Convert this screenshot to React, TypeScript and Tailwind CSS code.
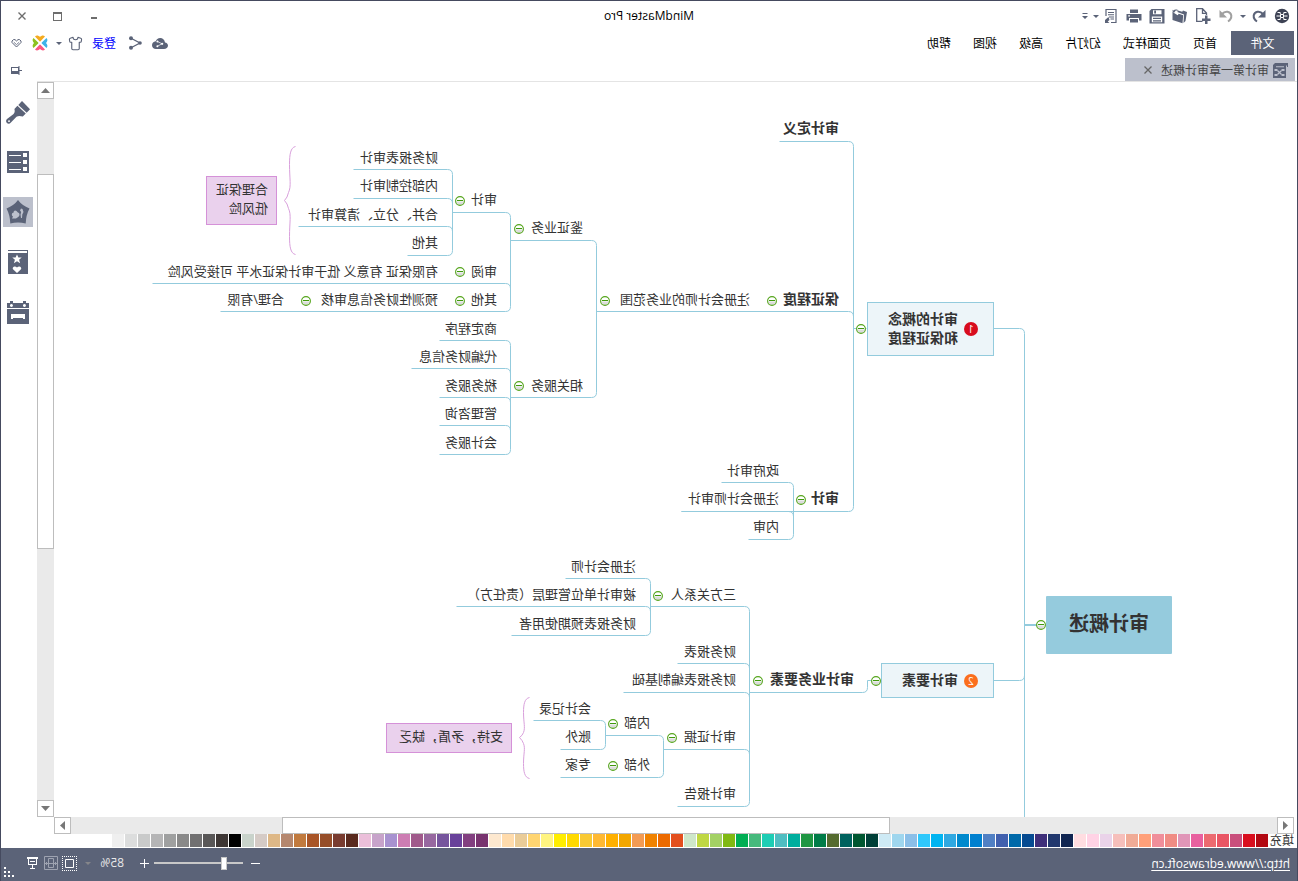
import { ReactNode } from "react";
import { Shirt } from "lucide-react";

interface MapLabel {
  text: string;
  x: number;
  y: number;
  bold?: boolean;
}

interface Branch {
  trunk: number;
  // [y of the line, x where the line ends]
  lines: [number, number][];
}

const MENUS = ["首页", "页面样式", "幻灯片", "高级", "视图", "帮助"];

const SWATCHES = [
  "#b20812", "#d90e1e", "#c94f7c", "#e95564", "#ec6a70", "#e8609f", "#e096b8", "#f08c84", "#f08e9a", "#ffa07a",
  "#f0ab96", "#f6bfbb", "#ead3e9", "#ffd3e5", "#ffdde1", "#102551", "#22386e", "#3f2f7a", "#064b91", "#0069a9",
  "#4160ae", "#5180c4", "#0080cf", "#0089cd", "#2fa8e1", "#00b4f1", "#2fc8fb", "#8bbfe8", "#9fd6ee", "#ceeaf5",
  "#004038", "#005731", "#00625e", "#556b2f", "#007c48", "#1f9643", "#00ae9e", "#4fbdc1", "#1dcdb4", "#46b97c",
  "#00ae53", "#80b912", "#a3d164", "#bfd743", "#cee7c9", "#e34f1e", "#ec6a00", "#f08200", "#f39b53", "#f2a600",
  "#ffb000", "#ffb933", "#f9c933", "#ffd900", "#ffed00", "#fff480", "#ffd571", "#eacc98", "#ffdbac", "#fde8cf",
  "#78336f", "#823f80", "#68419a", "#76559d", "#9768a0", "#a05a8b", "#cd7db3", "#a892d0", "#c7a3ca", "#ebbfda",
  "#5a2a1e", "#793c30", "#964e29", "#a95527", "#c17a3e", "#b5876e", "#deb887", "#d5cbc6", "#c9d3cb", "#000000",
  "#3e3735", "#595757", "#717071", "#898989", "#9fa0a0", "#b5b5b6", "#c9caca", "#dcdddd", "#efefef"
];

// x is the left edge of the text, y its middle
const LABELS: MapLabel[] = [
  { text: "审计定义", x: 458, y: 47, bold: true },
  { text: "保证程度", x: 458, y: 218, bold: true },
  { text: "审计", x: 458, y: 417, bold: true },
  { text: "注册会计师的业务范围", x: 547, y: 218 },
  { text: "鉴证业务", x: 714, y: 146 },
  { text: "相关服务", x: 714, y: 304 },
  { text: "审计", x: 800, y: 118 },
  { text: "审阅", x: 800, y: 190 },
  { text: "其他", x: 800, y: 218 },
  { text: "财务报表审计", x: 859, y: 76 },
  { text: "内部控制审计", x: 859, y: 104 },
  { text: "合并、分立、清算审计", x: 859, y: 133 },
  { text: "其他", x: 859, y: 161 },
  { text: "有限保证 有意义 低于审计保证水平 可接受风险", x: 859, y: 190 },
  { text: "预测性财务信息审核", x: 859, y: 218 },
  { text: "合理/有限", x: 1013, y: 218 },
  { text: "商定程序", x: 800, y: 247 },
  { text: "代编财务信息", x: 800, y: 275 },
  { text: "税务服务", x: 800, y: 304 },
  { text: "管理咨询", x: 800, y: 332 },
  { text: "会计服务", x: 800, y: 361 },
  { text: "政府审计", x: 518, y: 389 },
  { text: "注册会计师审计", x: 518, y: 417 },
  { text: "内审", x: 518, y: 445 },
  { text: "审计业务要素", x: 443, y: 598, bold: true },
  { text: "三方关系人", x: 561, y: 513 },
  { text: "注册会计师", x: 661, y: 485 },
  { text: "被审计单位管理层（责任方）", x: 661, y: 513 },
  { text: "财务报表预期使用者", x: 661, y: 542 },
  { text: "财务报表", x: 561, y: 570 },
  { text: "财务报表编制基础", x: 561, y: 598 },
  { text: "审计证据", x: 561, y: 655 },
  { text: "审计报告", x: 561, y: 712 },
  { text: "内部", x: 647, y: 641 },
  { text: "外部", x: 647, y: 683 },
  { text: "会计记录", x: 706, y: 627 },
  { text: "账外", x: 706, y: 655 },
  { text: "专家", x: 706, y: 683 }
];

const TOGGLES: [number, number][] = [
  [256, 543], [436, 247], [421, 599], [525, 219], [692, 219], [778, 147], [837, 119], [837, 190], [837, 219],
  [991, 219], [778, 304], [496, 418], [539, 599], [639, 514], [625, 656], [684, 642], [684, 684]
];

const BRANCHES: Branch[] = [
  { trunk: 443, lines: [[59, 517], [229, 700], [429, 615]] },
  { trunk: 700, lines: [[158, 786], [315, 786]] },
  { trunk: 786, lines: [[130, 844], [201, 1144], [229, 1076]] },
  { trunk: 844, lines: [[87, 943], [116, 943], [144, 998], [173, 889]] },
  { trunk: 786, lines: [[258, 857], [286, 885], [315, 857], [343, 857], [372, 857]] },
  { trunk: 503, lines: [[400, 575], [429, 615], [457, 548]] },
  { trunk: 547, lines: [[524, 646], [581, 619], [610, 673], [667, 633], [724, 619]] },
  { trunk: 646, lines: [[496, 731], [524, 840], [553, 785]] },
  { trunk: 633, lines: [[653, 691], [695, 736]] },
  { trunk: 691, lines: [[638, 763], [667, 736]] }
];

function branchPath({ trunk, lines }: Branch) {
  const top = lines[0][0];
  const bottom = lines[lines.length - 1][0];
  const parts = [`M${trunk} ${top + 5}V${bottom - 5}`];
  lines.forEach(([y, end], i) => {
    const from = i === lines.length - 1 ? y - 5 : y + 5;
    parts.push(`M${trunk} ${from}Q${trunk} ${y} ${trunk + 5} ${y}H${end}`);
  });
  return parts.join("");
}

function Svg({ w, h, children, className = "" }: { w: number; h: number; children: ReactNode; className?: string }) {
  return (
    <svg width={w} height={h} viewBox={`0 0 ${w} ${h}`} className={`block shrink-0 ${className}`} fill="currentColor" aria-hidden="true">
      {children}
    </svg>
  );
}

function IconButton({ label, children, className = "" }: { label: string; children: ReactNode; className?: string }) {
  return (
    <button aria-label={label} className={`flex shrink-0 items-center justify-center ${className}`}>
      {children}
    </button>
  );
}

function Caret({ className = "" }: { className?: string }) {
  return (
    <Svg w={6} h={3} className={className}>
      <path d="M0 0h6l-3 3z" />
    </Svg>
  );
}

function QuickAccess() {
  return (
    <div className="flex items-center gap-[7px] pl-[7px] text-[#5b6378]">
      <IconButton label="MindMaster">
        <Svg w={16} h={16}>
          <circle cx="8" cy="8" r="7.200" fill="#3d4254" />
          <path d="M6.500 6.500h3v3h-3zM3.500 4.500h3M9.500 4.500h3M2.500 8h4M9.500 8h4M3.500 11.500h3M9.500 11.500h3M5.500 4.500l1.500 2M10.500 4.500l-1.500 2M5.500 11.500l1.500-2M10.500 11.500l-1.500-2" fill="none" stroke="#fff" />
        </Svg>
      </IconButton>
      <IconButton label="撤销">
        <Svg w={16} h={16}>
          <path d="M1.500 2v7.500H9z" />
          <path d="M4 6C7 2.500 12.500 3 13.300 7.500c.2 2.500-1 4.500-3.300 6" fill="none" stroke="currentColor" strokeWidth="2" />
        </Svg>
      </IconButton>
      <IconButton label="撤销列表" className="-mr-0.5 -ml-[3px] w-2">
        <Caret />
      </IconButton>
      <IconButton label="恢复" className="text-[#a0a0a0]">
        <Svg w={16} h={16}>
          <path d="M14.500 2v7.500H7z" />
          <path d="M12 6C9 2.500 3.500 3 2.700 7.500c-.2 2.500 1 4.500 3.300 6" fill="none" stroke="currentColor" strokeWidth="2" />
        </Svg>
      </IconButton>
      <IconButton label="新建">
        <Svg w={16} h={16}>
          <path d="M4.500 7V5L8.500.7h5.800v12.600H8.500M8.500 1v4.300h-4" fill="none" stroke="currentColor" strokeWidth="1.300" />
          <path d="M3.500 7.500h2.500v3h3v2.500h-3v3H3.500v-3h-3v-2.500h3z" />
        </Svg>
      </IconButton>
      <IconButton label="打开">
        <Svg w={16} h={16}>
          <path d="M1 4l4-1.500.8 1.200L10 2.500l.7 1.600L4 6.500 4.500 15 2.500 13z" />
          <path d="M4.800 7.200l4.500-1.500 1 1.500L15.500 4v8L5.500 15.200z" />
          <path d="M10 2c2-.8 3.500-.6 4.500.4l1-.6-.3 3-2.700-.8.9-.7c-.9-.7-1.700-.9-3.400-.5z" />
        </Svg>
      </IconButton>
      <IconButton label="保存">
        <Svg w={16} h={16}>
          <path fillRule="evenodd" d="M.5 1h13l2 2v12.500H.5zM3.500 2.200v4h8.500v-4zM2.800 8.500v5.800h10.400V8.500z" />
          <path d="M9 2.500h1.800v3H9zM4 9.800h8v1.200H4zM4 12.200h8v1.200H4z" />
        </Svg>
      </IconButton>
      <IconButton label="打印">
        <Svg w={16} h={16}>
          <path fillRule="evenodd" d="M4 1.500h8V5H4zM.5 6h15v6.500H13V10H3v2.500H.5zM12 7.200v1.300h1.800V7.200z" />
          <path d="M4 11h8v3.500H4z" />
        </Svg>
      </IconButton>
      <IconButton label="导出">
        <Svg w={16} h={16}>
          <path d="M13 8V1.500H3v13h5" fill="none" stroke="currentColor" strokeWidth="1.200" />
          <path d="M5 4h6v1H5zM5 6.200h6v1H5zM5 8.400h5v1H5zM5 10.600h3.500v1H5zM10.500 9l3.500 3v-1.800V15H9.500l1.800-1.500L9.500 12z" />
        </Svg>
      </IconButton>
      <IconButton label="导出列表" className="-mr-0.5 -ml-1 w-2">
        <Caret />
      </IconButton>
      <IconButton label="自定义" className="-ml-0.5 w-2">
        <Svg w={6} h={7}>
          <path d="M.5 0h5v1h-5zM0 3h6L3 6z" />
        </Svg>
      </IconButton>
    </div>
  );
}

function TitleBar() {
  return (
    <header className="grid h-[30px] shrink-0 grid-cols-[1fr_auto_1fr] items-center">
      <QuickAccess />
      <h1 className="text-xs text-black">MindMaster Pro</h1>
      <div className="flex justify-end pr-[3px] text-[#6d6d6d]">
        <IconButton label="最小化" className="h-5 w-9">
          <Svg w={8} h={8}>
            <path d="M1 5h6v2H1z" />
          </Svg>
        </IconButton>
        <IconButton label="最大化" className="h-5 w-9">
          <Svg w={9} h={9}>
            <path fillRule="evenodd" d="M0 0h9v9H0zM1 2v6h7V2z" />
          </Svg>
        </IconButton>
        <IconButton label="关闭" className="h-5 w-9">
          <Svg w={8} h={8}>
            <path d="M.5.5l7 7M7.500.5l-7 7" stroke="currentColor" strokeWidth="1.400" />
          </Svg>
        </IconButton>
      </div>
    </header>
  );
}

function MenuBar() {
  return (
    <div className="flex h-6 shrink-0 items-center justify-between pl-[3px] text-xs text-black">
      <nav className="flex items-center">
        <button className="mr-[3px] h-6 w-[63px] bg-[#5b6378] pt-0.5 text-white">文件</button>
        {MENUS.map(menu => (
          <button key={menu} className="h-6 px-[11px] pt-0.5 whitespace-nowrap">
            {menu}
          </button>
        ))}
      </nav>
      <div className="flex items-center pr-2.5 text-[#5b6378]">
        <IconButton label="云" className="mr-2.5">
          <Svg w={16} h={11}>
            <path d="M4 11C1.800 11 0 9.700 0 7.600 0 5.800 1.400 4.700 3 4.400 3.500 1.800 5.300 0 7.800 0c2.200 0 3.900 1.300 4.500 3.200C14.500 3.500 16 5 16 7.200 16 9.500 14.300 11 12 11z" />
            <path d="M10.500 3.500L6 5.800l4.500 2.400" fill="none" stroke="#fff" strokeWidth=".7" />
            <circle cx="10.600" cy="3.600" r="1" fill="#fff" />
            <circle cx="5.800" cy="5.800" r="1.100" fill="#fff" />
            <circle cx="10.600" cy="8.200" r="1" fill="#fff" />
          </Svg>
        </IconButton>
        <IconButton label="分享" className="mr-[13px]">
          <Svg w={13} h={14}>
            <path d="M11 2.200L2 7l9 4.800" fill="none" stroke="currentColor" strokeWidth="1.300" />
            <circle cx="11" cy="2.200" r="2" />
            <circle cx="2" cy="7" r="1.800" />
            <circle cx="11" cy="11.800" r="2" />
          </Svg>
        </IconButton>
        <a href="#login" className="mr-[9px] pt-0.5 text-[#0000ff]">
          登录
        </a>
        <IconButton label="主题" className="mr-1.5">
          <Shirt className="size-[15px]" strokeWidth={1.8} />
        </IconButton>
        <IconButton label="主题列表" className="mr-2">
          <Caret />
        </IconButton>
        <IconButton label="产品" className="mr-2.5">
          <Svg w={16} h={16}>
            <path d="M3 1.500C4.500 0 6.500.5 8 2 9.500.5 11.500 0 13 1.500L8.500 6.200q-.5.500-1 0z" fill="#f5ab1f" />
            <path d="M3 14.500C4.500 16 6.500 15.500 8 14c1.500 1.500 3.500 2 5 .5L8.500 9.800q-.5-.5-1 0z" fill="#fb5880" />
            <path d="M1.500 3C0 4.500.5 6.500 2 8 .5 9.500 0 11.500 1.500 13L6.200 8.500q.5-.5 0-1z" fill="#3fb3e8" />
            <path d="M14.500 3C16 4.500 15.500 6.500 14 8c1.500 1.500 2 3.500.5 5L9.800 8.500q-.5-.5 0-1z" fill="#8dc21f" />
          </Svg>
        </IconButton>
        <IconButton label="收藏">
          <Svg w={11} h={9}>
            <path d="M5.500 8L1 3.500V2L2.500.6H4L5.500 2 7 .6h1.500L10 2v1.500z" fill="none" stroke="currentColor" />
            <path d="M2.800 3.200L5.500 5.600l2.700-2.400" fill="none" stroke="currentColor" strokeWidth=".8" />
          </Svg>
        </IconButton>
      </div>
    </div>
  );
}

function TabRow() {
  return (
    <div className="flex h-[26px] shrink-0 items-end justify-between pl-0.5 text-xs">
      <div className="flex h-[23px] w-[170px] items-center bg-[#bcc0cc] pl-[7px] text-[#5b6378]">
        <Svg w={16} h={16} className="mr-[3px]">
          <path d="M0 1h13l2 2v4h-1V3.500H1V5H0z" />
          <path fillRule="evenodd" d="M2 3h12l1 1v12H2zM3.500 7v2h3V7zM10.500 7v2h3V7zM3.500 12v2h3v-2zM10.500 12v2h3v-2zM4 4.200v1h8v-1z" />
          <path d="M6.500 8.500l4 4M10.500 8.500l-4 4" stroke="#bcc0cc" strokeWidth="1.200" />
        </Svg>
        <button className="pt-0.5 whitespace-nowrap text-[#444]">审计第一章审计概述</button>
        <IconButton label="关闭标签" className="ml-[9px]">
          <Svg w={8} h={8} className="text-[#666]">
            <path d="M.5.5l7 7M7.500.5l-7 7" stroke="currentColor" strokeWidth="1.300" />
          </Svg>
        </IconButton>
      </div>
      <IconButton label="固定" className="mr-2.5 h-[21px]">
        <Svg w={11} h={9}>
          <path fillRule="evenodd" d="M3 1h8v7H3zM4 2v3h6V2z" fill="#5b6378" />
          <path d="M2.500 0h1v9h-1zM0 4h3v1H0z" fill="#5b6378" />
        </Svg>
      </IconButton>
    </div>
  );
}

function Toggle({ x, y }: { x: number; y: number }) {
  return (
    <button aria-label="折叠" className="absolute size-2.5 -translate-1/2" style={{ left: x, top: y }}>
      <svg viewBox="0 0 10 10" className="block size-2.5">
        <circle cx="5" cy="5" r="4.400" fill="#fff" />
        <path d="M.8 5.500h8.400a4.300 4.300 0 0 1-8.400 0z" fill="#dcdcdc" />
        <circle cx="5" cy="5" r="4.400" fill="none" stroke="#55a51c" strokeWidth="1.100" />
        <path d="M2 4.500h6" stroke="#3f9a0c" />
      </svg>
    </button>
  );
}

function MindMap() {
  return (
    <main className="relative min-w-0 flex-1 overflow-hidden bg-white text-[13px] text-[#333]">
      <svg className="absolute inset-0 size-full" fill="none" stroke="#93cbdd" aria-hidden="true">
        <g transform="translate(.5 .5)">
          {BRANCHES.map((branch, i) => (
            <path key={i} d={branchPath(branch)} />
          ))}
          <path d="M430 246H443M415 598H429V605Q429 610 434 610H547" />
          <path d="M303 246H277Q272 246 272 251V2000M303 598H277Q272 598 272 593" />
          <path d="M251 542.500H272" strokeWidth="2" />
          <g stroke="#d9a0dc">
            <path d="M1001 64C1006 65 1007 72 1007 82C1007 96 1005 104 1008 110Q1009 115 1012 118Q1009 121 1008 126C1005 132 1007 140 1007 154C1007 164 1006 171 1001 172" />
            <path d="M767 615C772 616 773 622 773 630C773 640 771 645 773 650Q774 653 777 655Q774 658 773 661C771 666 773 671 773 681C773 689 772 695 767 696" />
          </g>
        </g>
      </svg>

      <div className="absolute top-[514px] left-[125px] flex h-[58px] w-[126px] items-center justify-center rounded-[1px] bg-[#95cbdd] pb-0.5 text-xl font-bold">
        审计概述
      </div>
      <div className="absolute top-[220px] left-[303px] flex h-[54px] w-[127px] items-center border border-[#93cbdd] bg-[#edf5f9] pl-[15px] text-sm leading-[19px] font-bold">
        <span className="mr-1.5 flex size-3.5 items-center justify-center rounded-full bg-[#d80c1e] text-[10px] leading-none font-normal text-white">1</span>
        <span className="pb-0.5">
          审计的概念
          <br />
          和保证程度
        </span>
      </div>
      <div className="absolute top-[581px] left-[303px] flex h-[35px] w-[113px] items-center border border-[#93cbdd] bg-[#edf5f9] pl-[15px] text-sm leading-[19px] font-bold">
        <span className="mr-1.5 flex size-3.5 items-center justify-center rounded-full bg-[#fb6e1d] text-[10px] leading-none font-normal text-white">2</span>
        <span className="pb-0.5">审计要素</span>
      </div>
      <div className="absolute top-[94px] left-[1020px] h-[49px] w-[71px] border border-[#d591d8] bg-[#ead1ed] pt-[3px] pl-2 leading-[19px]">
        合理保证
        <br />
        低风险
      </div>
      <div className="absolute top-[641px] left-[785px] h-[30px] w-[126px] border border-[#d591d8] bg-[#ead1ed] pt-[3px] pl-2 leading-[19px] whitespace-nowrap">
        支持，矛盾，缺乏
      </div>

      {LABELS.map(label => (
        <span
          key={`${label.x}-${label.y}`}
          className={`absolute -translate-y-1/2 pb-0.5 leading-5 whitespace-nowrap ${label.bold ? "text-sm font-bold" : ""}`}
          style={{ left: label.x, top: label.y }}
        >
          {label.text}
        </span>
      ))}
      {TOGGLES.map(([x, y]) => (
        <Toggle key={`${x}-${y}`} x={x} y={y} />
      ))}
    </main>
  );
}

const SCROLL_BUTTON = "size-[17px] border border-[#bdbdbd] bg-white text-[#777]";

function VerticalScroll() {
  return (
    <div className="flex w-[17px] shrink-0 flex-col bg-[#eaeaea]">
      <IconButton label="向上" className={SCROLL_BUTTON}>
        <Svg w={9} h={5}>
          <path d="M0 5h9L4.500 0z" />
        </Svg>
      </IconButton>
      <div className="grow-[75] basis-0" />
      <div className="grow-[374] basis-0 border border-[#bdbdbd] bg-white" />
      <div className="grow-[252] basis-0" />
      <IconButton label="向下" className={SCROLL_BUTTON}>
        <Svg w={9} h={5}>
          <path d="M0 0h9L4.500 5z" />
        </Svg>
      </IconButton>
    </div>
  );
}

function HorizontalScroll() {
  return (
    <div className="mr-[17px] ml-[3px] flex h-[17px] shrink-0 bg-[#eaeaea]">
      <IconButton label="向左" className={SCROLL_BUTTON}>
        <Svg w={5} h={9}>
          <path d="M5 0v9L0 4.500z" />
        </Svg>
      </IconButton>
      <div className="grow-[388] basis-0" />
      <div className="grow-[607] basis-0 border border-[#bdbdbd] bg-white" />
      <div className="grow-[211] basis-0" />
      <IconButton label="向右" className={SCROLL_BUTTON}>
        <Svg w={5} h={9}>
          <path d="M0 0v9l5-4.500z" />
        </Svg>
      </IconButton>
    </div>
  );
}

function SidePanel() {
  return (
    <aside className="flex w-9 shrink-0 flex-col items-end gap-5 pt-4 pr-0.5 text-[#5b6378]">
      <IconButton label="格式" className="size-[30px]">
        <Svg w={24} h={23}>
          <path d="M8 0L0 8.300l3.300 3.400L11.700 4z" />
          <path fillRule="evenodd" d="M12.600 4.800l-8.400 7.800 3 3c2.500-.9 4.500-1 6.300.2l5.600 5.700c1.100 1.400 2.900 1.500 4 .5 1.200-1.100 1.100-2.900-.1-3.900l-6.300-4.800c-1.500-1.600-1.700-3.100-1.100-5.200zM21 19.200a.9.900 0 1 1-.1 1.800.9.900 0 0 1 .1-1.800z" />
        </Svg>
      </IconButton>
      <IconButton label="大纲" className="size-[30px]">
        <Svg w={22} h={22}>
          <path fillRule="evenodd" d="M0 0h22v22H0zM2 2v4h4V2zM8 4v1h12V4zM2 9v4h4V9zM8 11v1h12v-1zM2 16v4h4v-4zM8 18v1h12v-1z" />
        </Svg>
      </IconButton>
      <IconButton label="图标" className="size-[30px] bg-[#bcc0cc]">
        <Svg w={24} h={24}>
          <path d="M12 0q4 5.500 11.500 8.500Q20 15 19.700 23.500 12 21.500 4.300 23.500 4 15 .5 8.500 8 5.500 12 0z" />
          <path d="M13.500 11c1.500-1.500 3.200 0 2.800 1.500 2 .2 2.600 3 .7 4l1 2h-4l-2.500-1.700c-1.800-1.800-1-4.200.6-4.300zM7.500 9l1.500-.5 1 2-1.200 1.500.7 2.500-.5 3.500H8l-.3-3.500L6.500 12z" fill="#bcc0cc" />
        </Svg>
      </IconButton>
      <IconButton label="剪贴画" className="size-[30px]">
        <Svg w={20} h={24}>
          <path d="M0 0h20v1H1v2h19v21H0z" />
          <path d="M11 4.500l1.400 3h3.300l-2.600 2.200 1 3.600-3.100-2-3.100 2 1-3.600L6.300 7.500h3.300zM11 23l-4-3.700c-1.200-1.900 1.600-4.400 4-1.800 2.400-2.600 5.200-.1 4 1.800z" fill="#fff" />
        </Svg>
      </IconButton>
      <IconButton label="任务" className="size-[30px]">
        <Svg w={22} h={23}>
          <path fillRule="evenodd" d="M0 2h3V0h3v2h10V0h3v2h3v5H0zM4.500 3a1.500 1.500 0 1 0 .1 0zM17.500 3a1.500 1.500 0 1 0 .1 0zM0 8h22v15H0zM4 13v5h2v-1h10v1h2v-5z" />
        </Svg>
      </IconButton>
    </aside>
  );
}

function ColorBar() {
  return (
    <div className="flex h-3.5 shrink-0 items-start pl-[3px] text-xs leading-[14px] text-[#333]">
      <span className="mr-0.5 shrink-0 whitespace-nowrap">填充</span>
      <div className="flex min-w-0 gap-px overflow-hidden">
        {SWATCHES.map(color => (
          <button key={color} aria-label={color} className="h-[13px] w-3 shrink-0" style={{ backgroundColor: color }} />
        ))}
      </div>
    </div>
  );
}

function StatusBar() {
  return (
    <footer className="flex h-[33px] shrink-0 items-center justify-between bg-[#5b6378] pr-[3px] pl-[7px] text-xs text-white">
      <a href="http://www.edrawsoft.cn" className="pb-0.5 underline underline-offset-2">
        http://www.edrawsoft.cn
      </a>
      <div className="flex h-full items-center pb-[3px]">
        <IconButton label="缩小" className="mr-2">
          <Svg w={9} h={9}>
            <path d="M0 4h9v1H0z" />
          </Svg>
        </IconButton>
        <input
          type="range"
          aria-label="缩放"
          min={0}
          max={100}
          defaultValue={19}
          className="mr-[5px] h-[13px] w-[89px] appearance-none bg-[linear-gradient(#c8c8c8,#c8c8c8)] bg-[length:100%_2px] bg-center bg-no-repeat [&::-webkit-slider-thumb]:h-[13px] [&::-webkit-slider-thumb]:w-1.5 [&::-webkit-slider-thumb]:appearance-none [&::-webkit-slider-thumb]:border [&::-webkit-slider-thumb]:border-[#c8c8c8] [&::-webkit-slider-thumb]:bg-white"
        />
        <IconButton label="放大" className="mr-4">
          <Svg w={9} h={9}>
            <path d="M0 4h4V0h1v4h4v1H5v4H4V5H0z" />
          </Svg>
        </IconButton>
        <span className="w-[25px] text-[#e8e8e8]">85%</span>
        <IconButton label="缩放列表" className="mx-2 text-[#85868a]">
          <Caret />
        </IconButton>
        <IconButton label="适应页面" className="mr-1">
          <Svg w={15} h={15}>
            <path d="M0 .5h15M0 14.500h15M.5 2v12M14.500 2v12" stroke="currentColor" strokeDasharray="1 1" shapeRendering="crispEdges" />
            <path d="M3.500 3.500h8v8h-8z" fill="none" stroke="currentColor" />
          </Svg>
        </IconButton>
        <IconButton label="适应宽度" className="mr-1.5 text-[#9ea3b1]">
          <Svg w={14} h={14}>
            <path d="M.5.5h13v13H.5zM4.500 2.500h5v9h-5zM1 7.500h12M2.500 6v3M11.500 6v3" fill="none" stroke="currentColor" />
          </Svg>
        </IconButton>
        <IconButton label="放映" className="mr-[13px]">
          <Svg w={11} h={12}>
            <path fillRule="evenodd" d="M0 0h11v2h-1v6H6v3h2v1H3v-1h2V8H1V2H0zM2 2v5h7V2zM3 4h5v1H3z" />
          </Svg>
        </IconButton>
        <Svg w={10} h={10} className="mb-px self-end">
          <path d="M8 0h2v2H8zM4 4h2v2H4zM8 4h2v2H8zM0 8h2v2H0zM4 8h2v2H4zM8 8h2v2H8z" />
        </Svg>
      </div>
    </footer>
  );
}

export default function App() {
  return (
    <div className="flex h-screen -scale-x-100 flex-col overflow-hidden border-x border-t border-[#454a5f] bg-white font-['Open_Sans','Noto_Sans_CJK_SC',sans-serif]">
      <TitleBar />
      <MenuBar />
      <TabRow />
      <div className="flex min-h-0 flex-1">
        <div className="flex min-w-0 flex-1 flex-col border-t border-[#e4e4e4]">
          <div className="flex min-h-0 flex-1">
            <MindMap />
            <VerticalScroll />
          </div>
          <HorizontalScroll />
        </div>
        <SidePanel />
      </div>
      <ColorBar />
      <StatusBar />
    </div>
  );
}
